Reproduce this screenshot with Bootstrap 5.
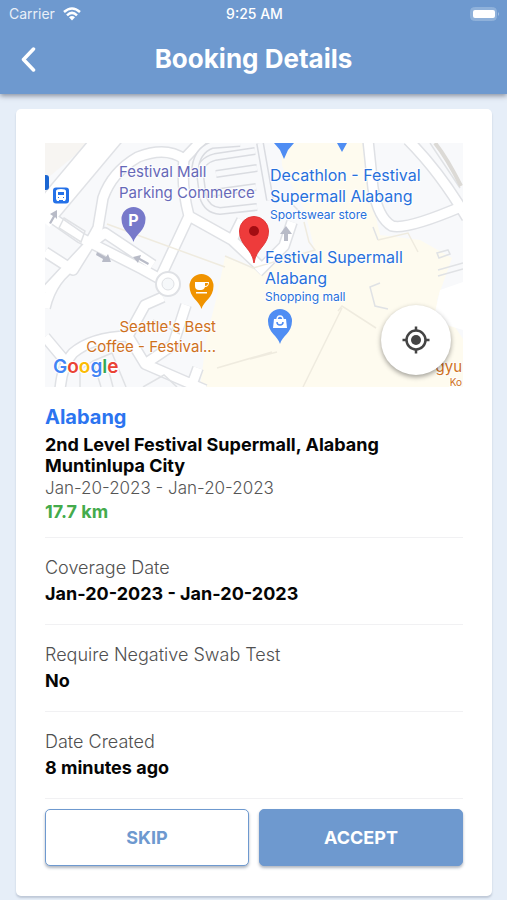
<!DOCTYPE html>
<html lang="en">
<head>
<meta charset="utf-8">
<meta name="viewport" content="width=device-width, initial-scale=1">
<title>Booking Details</title>
<link href="https://cdn.jsdelivr.net/npm/bootstrap@5.3.0/dist/css/bootstrap.min.css" rel="stylesheet">
<style>
  :root { --brand: #6e99cf; }
  body { background: #e6eef8; font-family: Inter, "Liberation Sans", sans-serif; font-size: 18px; color: #050505; }
  .app-head { background: var(--brand); color: #fff; box-shadow: 0 2px 5px rgba(60, 70, 90, .55); }
  .status-line { height: 28px; padding: 0 7px 0 9px; font-size: 14px; line-height: 28px; }
  .side { flex: 1 1 0; }
  .carrier { opacity: .85; }
  .title-line { height: 66px; padding: 0 12px 4px; }
  .title-line h1 { font-size: 26px; line-height: 32px; font-weight: 700; }
  .back-btn { width: 32px; height: 40px; }
  .page-main { padding: 15px 15px 5px 16px; }
  .details { border: 0; border-radius: 5px; padding: 34px 29px 30px; box-shadow: 0 2px 2px rgba(90, 105, 130, .28); }
  .map-box svg { display: block; width: 100%; height: auto; }
  .map-box text { font-family: Inter, "Liberation Sans", sans-serif; }
  .locate { width: 70px; height: 70px; right: 12px; bottom: 12px; background: #fff; box-shadow: 0 2px 5px rgba(0, 0, 0, .38); }
  .locate svg { width: 28px; height: 28px; }
  .branch { font-size: 20px; line-height: 28px; font-weight: 700; color: #2b74f0; margin: 16px 0 3px; }
  .address { line-height: 21px; font-weight: 700; max-width: 350px; }
  .period { font-size: 17px; line-height: 24px; font-weight: 300; color: #555; }
  .distance { line-height: 23px; font-weight: 700; color: #44ab4c; padding-bottom: 14px; }
  .fact { border-top: 1px solid #f1f1f3; padding: 17px 0; line-height: 26px; }
  .fact dt { font-weight: 300; color: #505050; }
  .fact dd { font-weight: 700; }
  .actions { border-top: 1px solid #f1f1f3; padding-top: 10px; gap: 10px; }
  .actions .btn { height: 57px; border-radius: 5px; font-size: 18px; font-weight: 700; border: 1px solid var(--brand); box-shadow: 0 2px 3px rgba(60, 75, 100, .4); }
  .btn-skip, .btn-skip:hover { background: #fff; color: var(--brand); }
  .btn-accept, .btn-accept:hover { background: var(--brand); color: #fff; }
</style>
</head>
<body>
<header class="app-head position-relative">
  <div class="status-line d-flex align-items-center">
    <div class="side d-flex align-items-center gap-2">
      <span class="carrier">Carrier</span>
      <svg width="18" height="14" viewBox="0 0 18 14" fill="none" stroke="#fff" stroke-width="2.500" aria-hidden="true"><path d="M1 5Q9-2 17 5M4 8.300Q9 3.500 14 8.300"/><path d="M9 13.500 6 10.300Q9 7.800 12 10.300Z" fill="#fff" stroke="none"/></svg>
    </div>
    <span class="fw-medium">9:25 AM</span>
    <div class="side d-flex justify-content-end">
      <svg width="30" height="14" viewBox="0 0 30 14" aria-hidden="true"><rect x=".5" y=".5" width="26" height="13" rx="4" fill="#8fb1da" stroke="#8fb1da"/><rect x="3" y="3" width="22" height="8" rx="2" fill="#fff"/><path d="M28 5q2 2 0 4z" fill="#a5c0e2"/></svg>
    </div>
  </div>
  <div class="title-line d-flex align-items-center">
    <div class="side"><button type="button" class="back-btn btn p-0 border-0 d-flex align-items-center justify-content-center" aria-label="Back"><svg width="18" height="26" viewBox="0 0 18 26" fill="none" stroke="#fff" stroke-width="3.500" stroke-linecap="round" stroke-linejoin="round"><path d="M14.500 3 4.500 13.500 14.500 24"/></svg></button></div>
    <h1 class="m-0">Booking Details</h1>
    <div class="side"></div>
  </div>
</header>

<main class="page-main">
  <article class="details card">
    <div class="map-box position-relative">
      <svg viewBox="45 143 418 244" role="img" aria-label="Map of Alabang">
        <defs>
          <g id="roads" fill="none" stroke-linejoin="round">
            <path d="M45 213 81 238 142 269 160 279M45 252 73 270 88 246M88 246 105 233 153 265M88 246 45 292"/>
            <path d="M88 246 98 228 103 198Q112 172 138 157 166 146 184 159L204 138"/>
            <path d="M184 159Q181 186 189 216L160 278M189 216 232 240 264 270M232 240 242 220"/>
            <path d="M45 308Q52 277 78 262M163 297 145 305 128 336Q92 337 73 353 62 365 60 390M45 337 66 362M128 336 145 364 205 390M145 364 173 345 186 305M198 368 190 390"/>
            <path d="M368 140 373 188Q378 218 392 226 407 230 463 206M408 140Q440 172 467 218"/>
            <path d="M292 222 284 246 258 272"/>
          </g>
          <path id="aisles" fill="none" d="M255 151 215 157Q200 161 200 174L203 197Q207 210 220 211L257 207M257 168 216 174M256 187 212 193M240 143 212 145Q196 151 195 171M260 143 270 200"/>
          <path id="pin" d="M0 18C-2 10-12 7-12-5A12 12 0 0 1 12-5C12 7 2 10 0 18Z"/>
        </defs>
        <path fill="#f8f9fb" d="M45 143h418v244H45z"/>
        <path fill="#f7f5f2" d="M45 143h45L45 180z"/>
        <path fill="#fefbef" d="M281 143h84l5 48 10 44 40 5 32 18-15 42 26 39v48H200l7-52 9-35 9-43 28 12 62-18-10-40-23-45z"/>
        <path fill="#fff" d="M440 290l23-8v48l-30-9z"/>
        <path fill="none" stroke="#e0e2e6" stroke-width="28" d="M112 133 45 213"/>
        <use href="#roads" stroke="#dfe1e5" stroke-width="12"/>
        <path fill="none" stroke="#fff" stroke-width="25" d="M112 133 40 219"/>
        <use href="#roads" stroke="#fff" stroke-width="9"/>
        <use href="#aisles" stroke="#dadce1" stroke-width="8"/>
        <use href="#aisles" stroke="#f8f9fb" stroke-width="5"/>
        <circle cx="168" cy="284" r="12" fill="#fff" stroke="#dfe1e5" stroke-width="2"/>
        <circle cx="168" cy="284" r="6" fill="#f6f8fa" stroke="#dfe1e5"/>
        <g fill="none" stroke="#e0e2e5" stroke-width="1.500">
          <path d="M64 218 85 231 81 242 59 228zM101 387 93 361 112 353 126 387M113 387 108 368M80 387V370L93 361M177 387 164 375 143 387M153 320 180 334"/>
          <path d="M373 227 378 240M380 283 370 287 375 306 388 309M437 253l11-3 2 4-11 4zM438 270l25-7M438 276l25-7M430 143l30 45M293 205 304 216"/>
          <path stroke="#efebdf" d="M342 308 303 387M250 359 277 352M217 368 272 352M338 311 342 306 376 328M107 224 225 267M225 256 253 268 315 250 309 242 304 222M378 240 408 233 418 252"/>
        </g>
        <path fill="none" stroke="#dcdad6" stroke-width="4" d="M435 143Q447 158 461 186"/>
        <g fill="#b8bbc7">
          <path d="M49 223 53 216 50 214 57 210 57 219 55 217 51 224zM97 252l9 5 2-3 3 8-9 0 1-3-7-4zM149 263l-9-5 1-3-8 2 5 6 1-3 9 5zM284 241v-7h-4l6-8 6 8h-4v7z"/>
        </g>
        <path fill="#1b66d2" d="M45 175h1q3 0 3 3v9q0 3-3 3h-1z"/>
        <rect x="53" y="187.500" width="16" height="16" rx="3" fill="#2672e8"/>
        <path fill="#fff" fill-rule="evenodd" d="M56 191q0-2 5-2t5 2v8l-1 2h-2v-1h-4v1h-2l-1-2zm2 1v3h6v-3zm0 5v1h1v-1zm5 0v1h1v-1z"/>
        <use href="#pin" transform="translate(133.500 224)" fill="#7779ca"/>
        <text x="133.500" y="225.500" font-size="16" font-weight="700" fill="#fff" text-anchor="middle">P</text>
        <use href="#pin" transform="translate(201.500 291)" fill="#f09300"/>
        <path fill="#fff" fill-rule="evenodd" d="M195 282h14q0 5-4 5-1 3-4 3h-2q-4 0-4-4zm10 1v3q3 0 3-3zM196 292h11v1.500h-11z"/>
        <use href="#pin" transform="translate(280 326)" fill="#4f8df3"/>
        <path fill="#fff" d="M274 319h12l1 9h-14z"/>
        <path fill="none" stroke="#fff" stroke-width="1.500" d="M277 320q0-4 3-4t3 4"/>
        <path fill="none" stroke="#4f8df3" stroke-width="1.500" d="M277 322q0 3 3 3t3-3"/>
        <path fill="#4f8df3" d="M274 143h20l-6 7-4 9-4-9zM337 143h10l-5 9z"/>
        <path fill="#ee3b3b" stroke="#e23535" d="M254 263C252 248 239.500 246 239.500 231A14.500 14.500 0 0 1 268.500 231C268.500 246 256 248 254 263Z"/>
        <circle cx="254" cy="231" r="5" fill="#a30d12"/>
        <g stroke="#fff" stroke-width="2" stroke-opacity=".75" paint-order="stroke" font-size="16">
          <g fill="#6668b8" font-size="15">
            <text x="119" y="177">Festival Mall</text>
            <text x="119" y="198">Parking Commerce</text>
          </g>
          <g fill="#2770dc">
            <text x="270" y="181">Decathlon - Festival</text>
            <text x="270" y="202">Supermall Alabang</text>
            <text x="270" y="219" font-size="12">Sportswear store</text>
            <text x="265" y="263">Festival Supermall</text>
            <text x="265" y="284">Alabang</text>
            <text x="265" y="301" font-size="12">Shopping mall</text>
          </g>
          <g fill="#cf711e" font-size="15">
            <text x="216" y="332" text-anchor="end">Seattle's Best</text>
            <text x="216" y="352" text-anchor="end">Coffee - Festival...</text>
            <text x="462" y="372" text-anchor="end">gyu</text>
            <text x="462" y="386" font-size="10" text-anchor="end">Ko</text>
          </g>
        </g>
        <text x="53" y="373" font-size="19" font-weight="600" stroke="#fff" stroke-width="2" paint-order="stroke"><tspan fill="#4285f4">G</tspan><tspan fill="#ea4335">o</tspan><tspan fill="#fbbc05">o</tspan><tspan fill="#4285f4">g</tspan><tspan fill="#34a853">l</tspan><tspan fill="#ea4335">e</tspan></text>
      </svg>
      <button type="button" class="locate btn rounded-circle position-absolute p-0 border-0 d-flex align-items-center justify-content-center" aria-label="Show my location">
        <svg viewBox="0 0 28 28" fill="none" stroke="#444" stroke-width="2.500" aria-hidden="true"><circle cx="14" cy="14" r="9.500"/><circle cx="14" cy="14" r="5" fill="#444" stroke="none"/><path d="M14 .5v4M14 23.500v4M.5 14h4M23.500 14h4"/></svg>
      </button>
    </div>
    <h2 class="branch">Alabang</h2>
    <div class="address">2nd Level Festival Supermall, Alabang Muntinlupa City</div>
    <div class="period">Jan-20-2023 - Jan-20-2023</div>
    <div class="distance">17.7 km</div>
    <dl class="m-0">
      <div class="fact"><dt>Coverage Date</dt><dd class="m-0">Jan-20-2023 - Jan-20-2023</dd></div>
      <div class="fact"><dt>Require Negative Swab Test</dt><dd class="m-0">No</dd></div>
      <div class="fact"><dt>Date Created</dt><dd class="m-0">8 minutes ago</dd></div>
    </dl>
    <div class="actions d-flex">
      <button type="button" class="btn btn-skip flex-fill w-50">SKIP</button>
      <button type="button" class="btn btn-accept flex-fill w-50">ACCEPT</button>
    </div>
  </article>
</main>
<script src="https://cdn.jsdelivr.net/npm/bootstrap@5.3.0/dist/js/bootstrap.bundle.min.js"></script>
</body>
</html>
